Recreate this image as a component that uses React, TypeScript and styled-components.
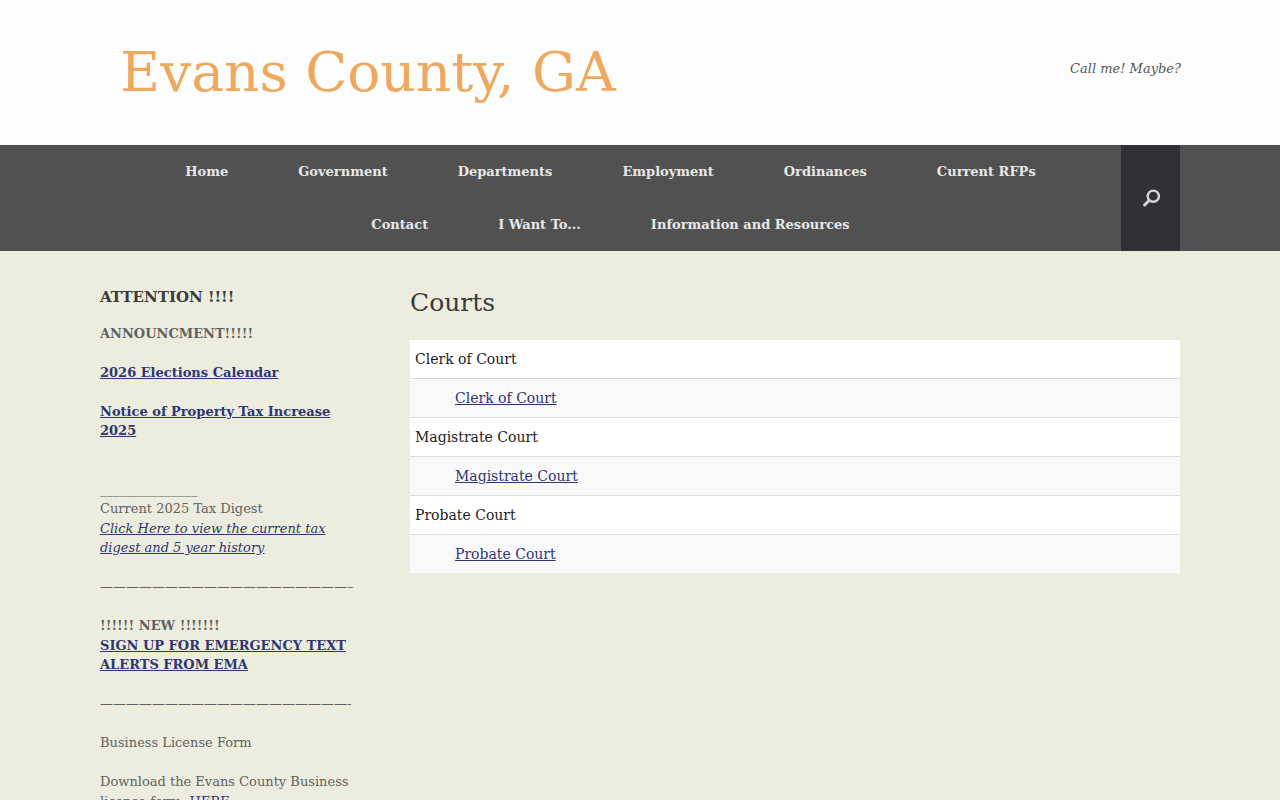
import React from 'react';
import styled, { createGlobalStyle } from 'styled-components';

const GlobalStyle = createGlobalStyle`
  html, body {
    margin: 0;
    padding: 0;
    height: 800px;
    overflow: hidden;
    background: #ecedde;
    font-family: "DejaVu Serif", serif;
    color: #616161;
  }
  a {
    color: #2f3573;
  }
`;

const Masthead = styled.header`
  height: 145px;
  background: #fdfdfd;
  box-sizing: border-box;
  padding: 0 99px 0 120px;
  display: flex;
  justify-content: space-between;
`;

const SiteTitle = styled.h1`
  margin: 38px 0 0;
  font-size: 55px;
  line-height: 68px;
  font-weight: 400;
  color: #eea95e;
`;

const Tagline = styled.p`
  margin: 60px 0 0;
  font-size: 13px;
  line-height: 18px;
  font-style: italic;
  color: #555;
`;

const NavBar = styled.nav`
  height: 106px;
  background: #515151;
  padding: 0 100px;
  display: flex;
`;

const NavList = styled.ul`
  flex: 1;
  margin: 0;
  padding: 0;
  list-style: none;
  display: flex;
  flex-wrap: wrap;
  justify-content: center;
`;

const NavItem = styled.li`
  height: 53px;
  line-height: 53px;
  padding: 0 35px;
  font-size: 13px;
  font-weight: 700;
  color: #e8e8e8;
`;

const SearchBox = styled.div`
  width: 59px;
  background: #303136;
  display: flex;
  align-items: center;
  justify-content: center;
`;

const Main = styled.main`
  padding: 0 100px;
  display: flex;
  gap: 55px;
`;

const Sidebar = styled.aside`
  width: 255px;
  flex-shrink: 0;
  padding-top: 36px;
  font-size: 13px;
  line-height: 19.5px;
`;

const WidgetTitle = styled.h3`
  margin: 0 0 16.6px;
  font-size: 15px;
  line-height: 20px;
  font-weight: 700;
  color: #3a3a3a;
`;

const Para = styled.p<{ $gap?: number }>`
  margin: 0 0 ${(p) => p.$gap ?? 19.5}px;
`;

const Rule = styled.span`
  display: block;
  white-space: nowrap;
`;

const Content = styled.section`
  flex: 1;
  padding-top: 35px;
`;

const PageTitle = styled.h2`
  margin: 0 0 21px;
  font-size: 25px;
  line-height: 33px;
  font-weight: 400;
  color: #3a3a3a;
`;

const Row = styled.div<{ $child?: boolean }>`
  height: 39px;
  box-sizing: border-box;
  line-height: 38px;
  font-size: 14px;
  color: #1c1c1c;
  padding-left: ${(p) => (p.$child ? 45 : 5)}px;
  background: ${(p) => (p.$child ? '#f9f9f9' : '#fff')};
  border-bottom: 1px solid #dcdcdc;

  &:last-child {
    height: 38px;
    border-bottom: none;
  }
`;

const courts = ['Clerk of Court', 'Magistrate Court', 'Probate Court'];
const navItems = ['Home', 'Government', 'Departments', 'Employment', 'Ordinances', 'Current RFPs', 'Contact', 'I Want To...', 'Information and Resources'];

const App = () => (
  <>
    <GlobalStyle />
    <Masthead>
      <SiteTitle>Evans County, GA</SiteTitle>
      <Tagline>Call me! Maybe?</Tagline>
    </Masthead>
    <NavBar>
      <NavList>
        {navItems.map((n) => (
          <NavItem key={n}>{n}</NavItem>
        ))}
      </NavList>
      <SearchBox>
        <svg width="18" height="18" viewBox="0 0 18 18" fill="none" stroke="#d6d6d6">
          <circle cx="11.3" cy="7.2" r="5.6" strokeWidth="2.4" />
          <path d="M6.6 12 L2.6 16" strokeWidth="3" strokeLinecap="round" />
        </svg>
      </SearchBox>
    </NavBar>
    <Main>
      <Sidebar>
        <WidgetTitle>ATTENTION !!!!</WidgetTitle>
        <Para><strong>ANNOUNCMENT!!!!!</strong></Para>
        <Para><a href="#"><strong>2026 Elections Calendar</strong></a></Para>
        <Para $gap={39}><a href="#"><strong>Notice of Property Tax Increase 2025</strong></a></Para>
        <Para>
          <Rule>_______________</Rule>
          Current 2025 Tax Digest
          <br />
          <a href="#"><em>Click Here to view the current tax digest and 5 year history</em></a>
        </Para>
        <Para><Rule>———————————————————–</Rule></Para>
        <Para>
          <strong>!!!!!! NEW !!!!!!!</strong>
          <br />
          <a href="#"><strong>SIGN UP FOR EMERGENCY TEXT ALERTS FROM EMA</strong></a>
        </Para>
        <Para><Rule>———————————————————-</Rule></Para>
        <Para>Business License Form</Para>
        <Para>
          Download the Evans County Business license form. <a href="#">HERE</a>
        </Para>
      </Sidebar>
      <Content>
        <PageTitle>Courts</PageTitle>
        <div>
          {courts.map((c) => (
            <React.Fragment key={c}>
              <Row>{c}</Row>
              <Row $child><a href="#">{c}</a></Row>
            </React.Fragment>
          ))}
        </div>
      </Content>
    </Main>
  </>
);

export default App;
